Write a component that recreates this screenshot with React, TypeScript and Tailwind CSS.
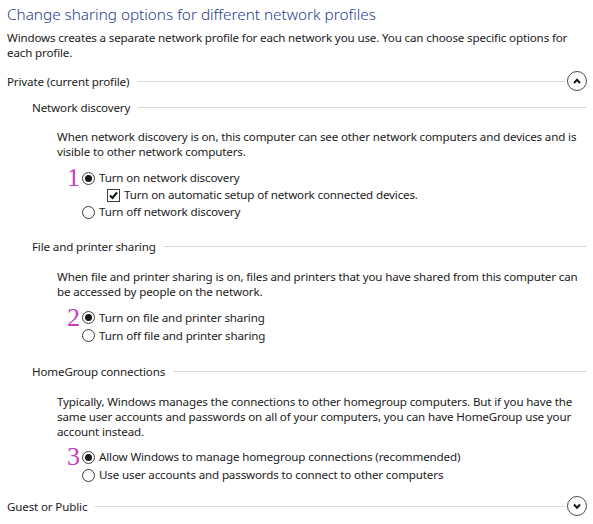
import React from "react";

const font = { fontFamily: '"Segoe UI", "Noto Sans", sans-serif' };

function Rule() {
  return <div className="ml-2 h-px flex-1 bg-[#d9d9d9]" />;
}

function Chevron({ up }: { up: boolean }) {
  return (
    <div className="ml-[2px] grid size-[20px] place-items-center rounded-full border border-[#4a4a4a]">
      <svg width="10" height="8" viewBox="0 0 10 8">
        <path
          d={up ? "M2 6 L5 2.8 L8 6" : "M2 2.5 L5 5.7 L8 2.5"}
          fill="none"
          stroke="#1a1a1a"
          strokeWidth="2"
        />
      </svg>
    </div>
  );
}

function SectionHeader({ title, up, className }: { title: string; up: boolean; className: string }) {
  return (
    <div className={`flex h-[20px] items-center ${className}`}>
      <span className="leading-[17px]">{title}</span>
      <Rule />
      <Chevron up={up} />
    </div>
  );
}

function SubHeader({ title, className }: { title: string; className: string }) {
  return (
    <div className={`flex items-center pl-[25px] ${className}`}>
      <span className="leading-[17px]">{title}</span>
      <Rule />
    </div>
  );
}

function Para({ lines, className }: { lines: string[]; className: string }) {
  return (
    <div className={`pl-[50px] leading-[15px] ${className}`}>
      {lines.map((l) => (
        <div key={l} className="whitespace-nowrap">
          {l}
        </div>
      ))}
    </div>
  );
}

function Radio({
  label,
  checked,
  mark,
  rowClass,
}: {
  label: string;
  checked?: boolean;
  mark?: string;
  rowClass: string;
}) {
  return (
    <div className={`relative flex items-center pl-[75px] ${rowClass}`}>
      {mark ? (
        <span
          className="absolute left-[60px] top-1/2 -translate-y-1/2 text-[26px] leading-none tracking-normal text-[#c33cc6]"
          style={{ fontFamily: '"Liberation Serif", serif' }}
        >
          {mark}
        </span>
      ) : null}
      <span className="grid size-[13px] place-items-center rounded-full border border-[#3c3c3c] bg-white">
        {checked ? <span className="size-[7px] rounded-full bg-[#1a1a1a]" /> : null}
      </span>
      <span className="ml-[4px] whitespace-nowrap">{label}</span>
    </div>
  );
}

function Check({ label, rowClass }: { label: string; rowClass: string }) {
  return (
    <div className={`flex items-center pl-[100px] ${rowClass}`}>
      <span className="grid size-[13px] place-items-center border border-[#3c3c3c] bg-white">
        <svg width="9" height="9" viewBox="0 0 9 9">
          <path d="M1 4.5 L3.5 7 L8 1.5" fill="none" stroke="#111" strokeWidth="2" />
        </svg>
      </span>
      <span className="ml-[4px] whitespace-nowrap">{label}</span>
    </div>
  );
}

export default function App() {
  return (
    <div
      className="h-[524px] w-[593px] overflow-hidden bg-white pl-[7px] pr-[6px] pt-[2px] text-[11.6px] tracking-[-0.15px] text-[#1b1b1b]"
      style={font}
    >
      <h1 className="whitespace-nowrap text-[15.3px] font-light leading-[24px] tracking-normal text-[#1f3c92]">
        Change sharing options for different network profiles
      </h1>
      <div className="mt-[4px] leading-[15px]">
        <div className="whitespace-nowrap">
          Windows creates a separate network profile for each network you use. You can choose specific options for
        </div>
        <div>each profile.</div>
      </div>

      <SectionHeader title="Private (current profile)" up className="mt-[11px]" />

      <SubHeader title="Network discovery" className="mt-[7.5px]" />
      <Para
        className="mt-[13.5px]"
        lines={[
          "When network discovery is on, this computer can see other network computers and devices and is",
          "visible to other network computers.",
        ]}
      />
      <div className="mt-[10.5px]">
        <Radio rowClass="h-[17px]" label="Turn on network discovery" checked mark="1" />
        <Check rowClass="h-[17px]" label="Turn on automatic setup of network connected devices." />
        <Radio rowClass="h-[17px]" label="Turn off network discovery" />
      </div>

      <SubHeader title="File and printer sharing" className="mt-[17px]" />
      <Para
        className="mt-[14px]"
        lines={[
          "When file and printer sharing is on, files and printers that you have shared from this computer can",
          "be accessed by people on the network.",
        ]}
      />
      <div className="mt-[10px]">
        <Radio rowClass="h-[18px]" label="Turn on file and printer sharing" checked mark="2" />
        <Radio rowClass="h-[18px]" label="Turn off file and printer sharing" />
      </div>

      <SubHeader title="HomeGroup connections" className="mt-[18.5px]" />
      <Para
        className="mt-[13.5px]"
        lines={[
          "Typically, Windows manages the connections to other homegroup computers. But if you have the",
          "same user accounts and passwords on all of your computers, you can have HomeGroup use your",
          "account instead.",
        ]}
      />
      <div className="mt-[9.5px]">
        <Radio rowClass="h-[18px]" label="Allow Windows to manage homegroup connections (recommended)" checked mark="3" />
        <Radio rowClass="h-[18px]" label="Use user accounts and passwords to connect to other computers" />
      </div>

      <SectionHeader title="Guest or Public" up={false} className="mt-[12px]" />
    </div>
  );
}
